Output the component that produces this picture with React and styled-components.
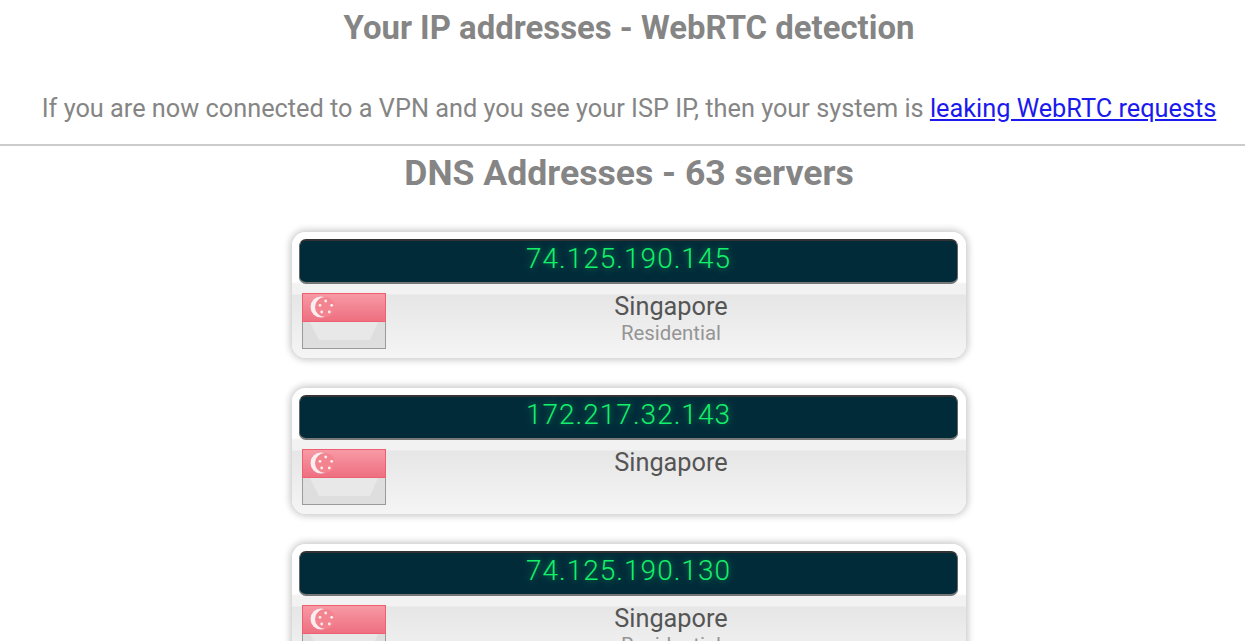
import React from "react";
import styled, { createGlobalStyle } from "styled-components";

const GlobalStyle = createGlobalStyle`
  html, body {
    margin: 0;
    padding: 0;
    height: 100%;
    overflow: hidden;
    background: #fff;
    font-family: Roboto, "Liberation Sans", sans-serif;
  }
`;

const Page = styled.div`
  width: 1258px;
  height: 641px;
  overflow: hidden;
  text-align: center;
`;

const Title = styled.h1`
  margin: 0;
  height: 55px;
  line-height: 55px;
  font-size: 32.9px;
  font-weight: 700;
  color: #858585;
`;

const Notice = styled.p`
  margin: 0;
  padding-top: 35px;
  height: 54px;
  line-height: 37px;
  font-size: 25.3px;
  color: #858585;
  a {
    color: #1a1aee;
    text-decoration: underline;
  }
`;

const Divider = styled.hr`
  margin: 0;
  border: 0;
  height: 2px;
  background: #cccccc;
`;

const Subtitle = styled.h2`
  margin: 0;
  height: 55px;
  line-height: 55px;
  font-size: 35.6px;
  font-weight: 700;
  color: #858585;
`;

const CardList = styled.div`
  display: flex;
  flex-direction: column;
  align-items: center;
  gap: 30px;
  padding-top: 31px;
`;

const Card = styled.div`
  flex: none;
  box-sizing: border-box;
  width: 674px;
  height: 126px;
  padding-top: 7px;
  border-radius: 14px;
  background: linear-gradient(#ffffff 0, #ffffff 50px, #f2f2f2 52px, #f2f2f2 62px, #e6e6e6 63px, #f5f5f5 100%);
  box-shadow: 0 0 7px 2px rgba(0, 0, 0, 0.22);
`;

const IpBar = styled.div`
  box-sizing: border-box;
  margin: 0 8px 0 7px;
  height: 45px;
  line-height: 35px;
  border-radius: 7px;
  background: #022b3a;
  border: 1px solid #666;
  border-top: 2px solid #333;
  border-bottom: 2px solid #777;
  font-family: Roboto, sans-serif;
  font-size: 28px;
  font-weight: 300;
  letter-spacing: 1px;
  color: #14f06a;
  text-shadow: 0 0 7px rgba(16, 224, 96, 0.6);
`;

const Details = styled.div`
  display: flex;
  padding: 9px 0 0 10px;
`;

const FlagBox = styled.svg`
  display: block;
  flex: none;
  width: 84px;
  height: 56px;
`;

const Place = styled.div`
  flex: 1;
  padding-right: 10px;
`;

const City = styled.div`
  line-height: 28px;
  font-size: 25.3px;
  color: #555555;
`;

const Kind = styled.div`
  line-height: 25px;
  font-size: 20.4px;
  color: #959595;
`;

const Flag = () => (
  <FlagBox viewBox="0 0 84 56">
    <defs>
      <linearGradient id="flagRed" x1="0" y1="0" x2="0" y2="1">
        <stop offset="0" stopColor="#f79aa5" />
        <stop offset="1" stopColor="#ee6f80" />
      </linearGradient>
    </defs>
    <rect x="0.5" y="0.5" width="83" height="55" fill="#e8e8e8" stroke="#9a9a9a" />
    <polygon points="1,29 8,29 17,47 68,47 76,29 83,29 83,55 1,55" fill="#dedede" />
    <rect x="0.5" y="0.5" width="83" height="28" fill="url(#flagRed)" stroke="#ee5f70" />
    <circle cx="19" cy="14" r="10.5" fill="#fbeef0" />
    <circle cx="23" cy="14" r="10" fill="#f3838f" />
    <circle cx="23.7" cy="8" r="1.4" fill="#fbeef0" />
    <circle cx="29.7" cy="12.3" r="1.4" fill="#fbeef0" />
    <circle cx="27.3" cy="19" r="1.4" fill="#fbeef0" />
    <circle cx="19.7" cy="19" r="1.4" fill="#fbeef0" />
    <circle cx="18" cy="12.3" r="1.4" fill="#fbeef0" />
  </FlagBox>
);

const servers = [
  { ip: "74.125.190.145", city: "Singapore", kind: "Residential" },
  { ip: "172.217.32.143", city: "Singapore", kind: "" },
  { ip: "74.125.190.130", city: "Singapore", kind: "Residential" },
];

const App = () => (
  <Page>
    <GlobalStyle />
    <Title>Your IP addresses - WebRTC detection</Title>
    <Notice>
      If you are now connected to a VPN and you see your ISP IP, then your system is{" "}
      <a href="#webrtc">leaking WebRTC requests</a>
    </Notice>
    <Divider />
    <Subtitle>DNS Addresses - 63 servers</Subtitle>
    <CardList>
      {servers.map((server) => (
        <Card key={server.ip}>
          <IpBar>{server.ip}</IpBar>
          <Details>
            <Flag />
            <Place>
              <City>{server.city}</City>
              <Kind>{server.kind}</Kind>
            </Place>
          </Details>
        </Card>
      ))}
    </CardList>
  </Page>
);

export default App;
